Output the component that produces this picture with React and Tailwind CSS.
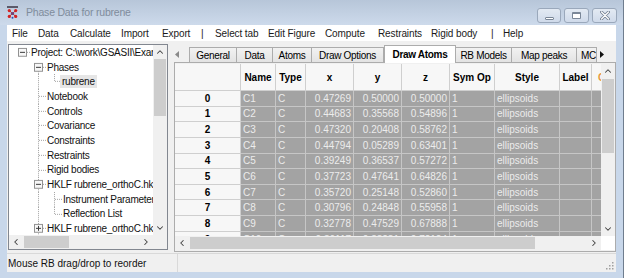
import React from 'react';
import { ChevronUp, ChevronDown, ChevronLeft, ChevronRight } from 'lucide-react';

const MENU = [
  ['File', 'w-[26px]'],
  ['Data', 'w-[32px]'],
  ['Calculate', 'w-[51px]'],
  ['Import', 'w-[41px]'],
  ['Export', 'w-[39px]'],
  ['|', 'w-[14px]'],
  ['Select tab', 'w-[53px]'],
  ['Edit Figure', 'w-[57px]'],
  ['Compute', 'w-[53px]'],
  ['Restraints', 'w-[53px]'],
  ['Rigid body', 'w-[60px]'],
  ['|', 'w-[12px]'],
  ['Help', 'w-[30px]'],
];

const TREE = [
  { lvl: 0, box: 'minus', text: 'Project: C:\\work\\GSASII\\Examples\\rubrene.gpx' },
  { lvl: 1, box: 'minus', text: 'Phases', first: true },
  { lvl: 2, text: 'rubrene', guides: [true], last: true, sel: true },
  { lvl: 1, text: 'Notebook' },
  { lvl: 1, text: 'Controls' },
  { lvl: 1, text: 'Covariance' },
  { lvl: 1, text: 'Constraints' },
  { lvl: 1, text: 'Restraints' },
  { lvl: 1, text: 'Rigid bodies' },
  { lvl: 1, box: 'minus', text: 'HKLF rubrene_orthoC.hkl' },
  { lvl: 2, text: 'Instrument Parameters', guides: [true] },
  { lvl: 2, text: 'Reflection List', guides: [true], last: true },
  { lvl: 1, box: 'plus', text: 'HKLF rubrene_orthoC.hkl' },
];

const TABS = [
  { label: 'General', w: 'w-[48px]' },
  { label: 'Data', w: 'w-[37px]' },
  { label: 'Atoms', w: 'w-[40px]' },
  { label: 'Draw Options', w: 'w-[73px]' },
  { label: 'Draw Atoms', w: 'w-[72px]', active: true },
  { label: 'RB Models', w: 'w-[57px]' },
  { label: 'Map peaks', w: 'w-[66px]' },
  { label: 'MCSA', w: 'w-[21px]', clip: true },
];

// grid columns (row label column first)
const COLS = [
  { head: '', w: 'w-[66px]' },
  { head: 'Name', w: 'w-[35px]', align: 'justify-start' },
  { head: 'Type', w: 'w-[30px]', align: 'justify-start' },
  { head: 'x', w: 'w-[48px]', align: 'justify-end' },
  { head: 'y', w: 'w-[48px]', align: 'justify-end' },
  { head: 'z', w: 'w-[48px]', align: 'justify-end' },
  { head: 'Sym Op', w: 'w-[45px]', align: 'justify-start' },
  { head: 'Style', w: 'w-[65px]', align: 'justify-start' },
  { head: 'Label', w: 'w-[32px]', align: 'justify-start' },
  { head: 'Color', w: 'w-[10px]', align: 'justify-start' },
];

const ATOMS = [
  ['C1', 'C', '0.47269', '0.50000', '0.50000'],
  ['C2', 'C', '0.44683', '0.35568', '0.54896'],
  ['C3', 'C', '0.47320', '0.20408', '0.58762'],
  ['C4', 'C', '0.44794', '0.05289', '0.63401'],
  ['C5', 'C', '0.39249', '0.36537', '0.57272'],
  ['C6', 'C', '0.37723', '0.47641', '0.64826'],
  ['C7', 'C', '0.35720', '0.25148', '0.52860'],
  ['C8', 'C', '0.30796', '0.24848', '0.55958'],
  ['C9', 'C', '0.32778', '0.47529', '0.67888'],
  ['C10', 'C', '0.36117', '0.38281', '0.72124'],
];

function Connector({ lvl, node, col }) {
  // one 16px indent column of the tree, drawn as dotted lines
  const dots = { stroke: '#a3a3a3', strokeWidth: 1, strokeDasharray: '1 1', shapeRendering: 'crispEdges' };
  const own = col === lvl;
  return (
    <svg width="16" height="14.7" viewBox="0 0 16 15" preserveAspectRatio="none" className="shrink-0">
      {!own && node.guides && node.guides[col - 1] && <line x1="8.5" y1="0" x2="8.5" y2="15" style={dots} />}
      {own && lvl > 0 && (
        <line x1="8.5" y1={node.first ? 7.5 : 0} x2="8.5" y2={node.last ? 7.5 : 15} style={dots} />
      )}
      {own && <line x1="9" y1="7.5" x2="16" y2="7.5" style={dots} />}
      {own && node.box && (
        <g>
          <rect x="4.5" y="3.5" width="8" height="8" fill="#f7f7f7" stroke="#919191" />
          <line x1="6" y1="7.5" x2="11" y2="7.5" stroke="#3a3a3a" />
          {node.box === 'plus' && <line x1="8.5" y1="5" x2="8.5" y2="10" stroke="#3a3a3a" />}
        </g>
      )}
    </svg>
  );
}

function VScroll({ thumb }) {
  return (
    <div className="w-[14px] shrink-0 flex flex-col bg-[#f0f0f0]">
      <div className="h-[14px] flex items-center justify-center text-[#404040]">
        <ChevronUp size={10} strokeWidth={2.5} />
      </div>
      <div className="flex-1 px-[1px]">
        <div className={`${thumb} bg-[#cdcdcd]`} />
      </div>
      <div className="h-[14px] flex items-center justify-center text-[#404040]">
        <ChevronDown size={10} strokeWidth={2.5} />
      </div>
    </div>
  );
}

function HScroll({ thumb }) {
  return (
    <div className="h-[14px] flex bg-[#f0f0f0] flex-1">
      <div className="w-[14px] flex items-center justify-center text-[#404040]">
        <ChevronLeft size={10} strokeWidth={2.5} />
      </div>
      <div className="flex-1 py-[1px]">
        <div className={`${thumb} h-full bg-[#cdcdcd]`} />
      </div>
      <div className="w-[14px] flex items-center justify-center text-[#404040]">
        <ChevronRight size={10} strokeWidth={2.5} />
      </div>
    </div>
  );
}

function CaptionButton({ w, children }) {
  return (
    <div className={`${w} h-[15px] rounded-[3px] border border-[#9aa8bb] bg-gradient-to-b from-[#e3eaf3] to-[#cfdaea] flex items-center justify-center`}>
      {children}
    </div>
  );
}

function AppIcon() {
  return (
    <svg width="11" height="13" viewBox="0 0 11 13" className="shrink-0">
      <rect x="0" y="0" width="11" height="2" fill="#5a5a6a" />
      <circle cx="5.5" cy="7.5" r="1.6" fill="#2855b8" />
      <circle cx="2.3" cy="4.6" r="1.6" fill="#d62020" />
      <circle cx="8.7" cy="4.6" r="1.6" fill="#d62020" />
      <circle cx="2.3" cy="10.4" r="1.6" fill="#d62020" />
      <circle cx="8.7" cy="10.4" r="1.6" fill="#d62020" />
      <circle cx="5.5" cy="11.8" r="1" fill="#2855b8" />
      <path d="M2.3 4.6 L8.7 10.4 M8.7 4.6 L2.3 10.4" stroke="#c03030" strokeWidth="1" />
    </svg>
  );
}

export default function App() {
  return (
    <div className="w-[624px] h-[278px] overflow-hidden bg-[#c8d7ea] flex flex-col font-['Liberation_Sans',Arial,sans-serif] text-[10px] text-black border-r border-[#6f7d8e]">
      {/* Title bar */}
      <div className="h-[25px] shrink-0 flex items-center bg-gradient-to-b from-[#b7c6d9] to-[#cddaeb] pl-[7px] pr-[6px]">
        <AppIcon />
        <span className="ml-[8px] text-[10.5px] text-[#7f8c9c] tracking-[-0.2px]">Phase Data for rubrene</span>
        <div className="ml-auto flex gap-[3px] self-start mt-[8px]">
          <CaptionButton w="w-[24px]">
            <div className="w-[9px] h-[3px] mt-[5px] border border-[#7a8798] bg-white rounded-[1px]" />
          </CaptionButton>
          <CaptionButton w="w-[25px]">
            <div className="w-[9px] h-[7px] border border-[#7a8798] border-t-2 bg-white rounded-[1px]" />
          </CaptionButton>
          <CaptionButton w="w-[25px]">
            <svg width="10" height="9" viewBox="0 0 10 9">
              <path d="M1.5 1 L8.5 8 M8.5 1 L1.5 8" stroke="#7a8798" strokeWidth="3" strokeLinecap="round" />
              <path d="M1.5 1 L8.5 8 M8.5 1 L1.5 8" stroke="#ffffff" strokeWidth="1.2" strokeLinecap="round" />
            </svg>
          </CaptionButton>
        </div>
      </div>

      {/* Client area */}
      <div className="flex-1 flex flex-col mx-[7px] mb-[6px] min-h-0">
        {/* Menu bar */}
        <div className="h-[16px] shrink-0 bg-white flex items-center pl-[5px] text-[#1a1a1a] tracking-[-0.1px]">
          {MENU.map(([label, w], i) => (
            <span key={i} className={`${w} shrink-0 whitespace-nowrap`}>{label}</span>
          ))}
        </div>

        {/* Main split */}
        <div className="h-[212px] shrink-0 bg-[#f0f0f0] flex">
          {/* Tree */}
          <div className="ml-[1px] mt-[3px] mb-[3px] w-[160px] shrink-0 border border-[#828790] bg-white flex flex-col">
            <div className="flex-1 flex min-h-0">
              <div className="flex-1 overflow-hidden pl-[5px] text-[#111] tracking-[-0.25px]">
                {TREE.map((node, i) => (
                  <div key={i} className="h-[14.7px] flex items-center whitespace-nowrap">
                    {Array.from({ length: node.lvl + 1 }).map((_, c) => (
                      <Connector key={c} lvl={node.lvl} node={node} col={c} />
                    ))}
                    <span className={node.sel ? 'bg-[#e6e6e6] -ml-[2px] px-[2px] leading-[13px]' : 'pl-[1px]'}>
                      {node.text}
                    </span>
                  </div>
                ))}
              </div>
              <VScroll thumb="mt-[0px] h-[57px]" />
            </div>
            <div className="flex">
              <HScroll thumb="ml-[1px] w-[45px]" />
              <div className="w-[14px] h-[14px] bg-[#f0f0f0]" />
            </div>
          </div>

          {/* Splitter */}
          <div className="w-[6px] shrink-0" />

          {/* Notebook */}
          <div className="flex-1 flex flex-col min-w-0">
            <div className="h-[21px] shrink-0 flex items-end relative z-10 tracking-[-0.3px]">
              <div className="w-[16px] h-[15px] flex items-center pl-[1px]">
                <svg width="4" height="7" viewBox="0 0 4 7"><path d="M4 0 L0 3.5 L4 7 Z" fill="#8a8a8a" /></svg>
              </div>
              {TABS.map((t) => (
                <div
                  key={t.label}
                  className={
                    t.active
                      ? `${t.w} h-[18px] -mb-[1px] bg-white border border-b-0 border-[#acacac] flex items-center justify-center font-bold whitespace-nowrap overflow-hidden`
                      : `${t.w} h-[15px] bg-gradient-to-b from-[#f2f2f2] to-[#e3e3e3] border border-b-0 border-[#acacac] -ml-[1px] flex items-center whitespace-nowrap overflow-hidden ${t.clip ? 'justify-start pl-[4px]' : 'justify-center'}`
                  }
                >
                  {t.label}
                </div>
              ))}
              <div className="w-[10px] h-[15px] flex items-center justify-center">
                <svg width="4" height="7" viewBox="0 0 4 7"><path d="M0 0 L4 3.5 L0 7 Z" fill="#111" /></svg>
              </div>
            </div>

            <div className="flex-1 border border-[#acacac] bg-[#f0f0f0] pt-[1px] flex flex-col min-h-0 mb-[1px]">
              <div className="flex h-[172px] shrink-0">
                {/* Grid viewport */}
                <div className="flex-1 overflow-hidden bg-white">
                  <div className="flex h-[27px]">
                    {COLS.map((c, i) => (
                      <div
                        key={i}
                        className={`${c.w} shrink-0 bg-[#f7f7f7] border-r border-b border-[#cfcfcf] flex items-center justify-center font-bold overflow-hidden whitespace-nowrap ${i === 9 ? 'text-[#e89a3c] justify-start pl-[6px]' : ''}`}
                      >
                        {c.head}
                      </div>
                    ))}
                  </div>
                  {ATOMS.map((a, r) => {
                    const vals = [a[0], a[1], a[2], a[3], a[4], '1', 'ellipsoids', '', ''];
                    return (
                      <div key={r} className="flex h-[15.65px]">
                        <div className="w-[66px] shrink-0 bg-[#f7f7f7] border-r border-b border-[#cfcfcf] flex items-center justify-center font-bold">
                          {r}
                        </div>
                        {vals.map((v, i) => (
                          <div
                            key={i}
                            className={`${COLS[i + 1].w} ${COLS[i + 1].align} shrink-0 bg-[#a3a3a3] border-r border-b border-[#c6c6c6] flex items-center px-[2px] text-[#ececec] whitespace-nowrap overflow-hidden`}
                          >
                            {v}
                          </div>
                        ))}
                      </div>
                    );
                  })}
                </div>
                <VScroll thumb="mt-[1px] h-[74px]" />
              </div>
              <div className="flex">
                <HScroll thumb="ml-[1px] w-[345px]" />
                <div className="w-[14px] h-[14px] bg-white" />
              </div>
            </div>
          </div>
        </div>

        {/* Status bar */}
        <div className="flex-1 bg-[#f0f0f0] border-t border-[#d9d9d9] flex items-center relative">
          <div className="w-[171px] h-full flex items-center pl-[1px] border-r border-[#d9d9d9] text-[#111]">
            Mouse RB drag/drop to reorder
          </div>
          <svg width="10" height="10" viewBox="0 0 10 10" className="absolute right-[2px] bottom-[2px]">
            {[[8, 8], [5, 8], [2, 8], [8, 5], [5, 5], [8, 2]].map(([x, y], i) => (
              <rect key={i} x={x} y={y} width="1.5" height="1.5" fill="#a0a0a0" />
            ))}
          </svg>
        </div>
      </div>
    </div>
  );
}
